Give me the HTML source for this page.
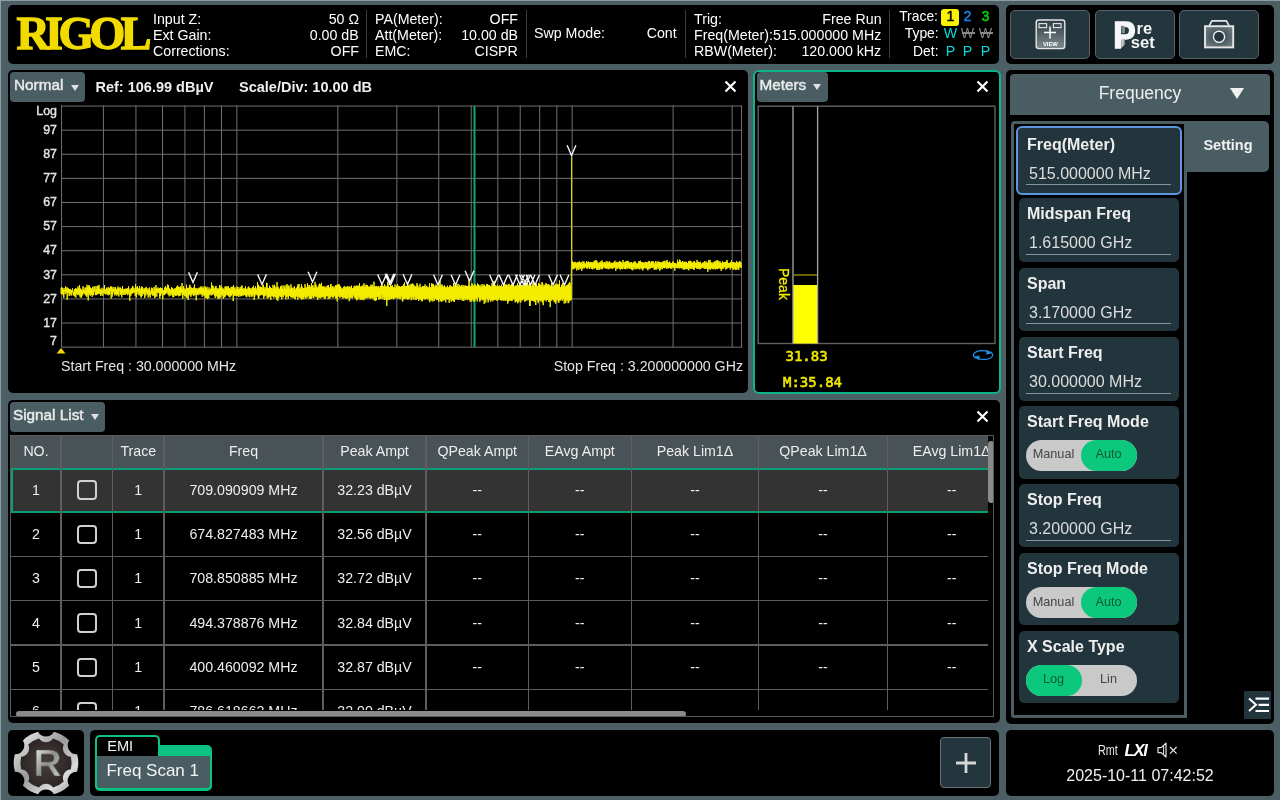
<!DOCTYPE html><html><head><meta charset="utf-8"><title>RIGOL EMI Freq Scan</title><style>
*{box-sizing:border-box;margin:0;padding:0}
html,body{width:1280px;height:800px;overflow:hidden}
body{background:#4b5f64;font-family:"Liberation Sans",sans-serif;color:#fff;position:relative;font-size:14px}
#root{position:absolute;left:0;top:0;width:1280px;height:800px;overflow:hidden;will-change:transform}
.abs{position:absolute}
.panel{position:absolute;background:#000;border-radius:5px}
.t{position:absolute;white-space:nowrap;line-height:1}
.hd{font-size:15px;color:#fff;transform:scaleX(.947);transform-origin:0 0}
.hd.r{transform-origin:100% 0}
.r{text-align:right}
.sep{position:absolute;width:1px;background:#3c3c3c;top:5px;height:48px}
.dd{position:absolute;background:#4a5d62;border-radius:4px;color:#ececec;-webkit-text-stroke:0.45px #ececec;font-size:15.3px}
.dd span{position:absolute;top:5.2px;white-space:nowrap;line-height:1}
.dd i{position:absolute;width:0;height:0;border-left:4.5px solid transparent;border-right:4.5px solid transparent;border-top:6px solid #e0e0e0}
.x{position:absolute;width:14px;height:14px}
.btn{position:absolute;background:#23353d;border:1px solid #5a6468;border-radius:5px}
.item{position:absolute;left:1019px;width:160px;background:#22343c;border-radius:5px}
.item b{position:absolute;left:8px;font-size:16px;color:#eee;white-space:nowrap;line-height:1}
.item em{position:absolute;left:10px;font-style:normal;font-size:16px;color:#ddd;white-space:nowrap;line-height:1}
.item u{position:absolute;left:7px;width:145px;height:1px;background:#8a9498}
.tog{position:absolute;left:7px;width:111px;height:31px;border-radius:16px;background:#c9c9c9;font-size:12.7px;color:#444}
.tog s{position:absolute;top:0;height:31px;width:56px;border-radius:16px;background:#0cc87c;text-decoration:none}
.tog span{position:absolute;top:8.7px;line-height:1;width:55px;text-align:center}
</style></head><body><div id="root">
<div class="abs" style="left:0;top:0;width:1280px;height:1px;background:#8d9da0"></div>
<div class="abs" style="left:0;top:0;width:1.4px;height:800px;background:#8d9da0"></div>
<div class="panel" style="left:8px;top:5px;width:991px;height:59px">
<div class="t" style="left:8.5px;top:5.5px;font-family:'Liberation Serif',serif;font-weight:bold;font-size:46px;color:#f2dc00;-webkit-text-stroke:1.3px #f2dc00;letter-spacing:-4.6px">RIGOL</div>
<div class="t hd" style="left:145px;top:6.3px">Input Z:</div>
<div class="t hd r" style="right:640px;top:6.3px">50 Ω</div>
<div class="t hd" style="left:145px;top:22.3px">Ext Gain:</div>
<div class="t hd r" style="right:640px;top:22.3px">0.00 dB</div>
<div class="t hd" style="left:145px;top:38.3px">Corrections:</div>
<div class="t hd r" style="right:640px;top:38.3px">OFF</div>
<div class="sep" style="left:357.7px"></div>
<div class="t hd" style="left:367px;top:6.3px">PA(Meter):</div>
<div class="t hd r" style="right:481px;top:6.3px">OFF</div>
<div class="t hd" style="left:367px;top:22.3px">Att(Meter):</div>
<div class="t hd r" style="right:481px;top:22.3px">10.00 dB</div>
<div class="t hd" style="left:367px;top:38.3px">EMC:</div>
<div class="t hd r" style="right:481px;top:38.3px">CISPR</div>
<div class="sep" style="left:517.6px"></div>
<div class="t hd" style="left:526px;top:20.4px">Swp Mode:</div>
<div class="t hd r" style="right:322px;top:20.4px">Cont</div>
<div class="sep" style="left:676.6px"></div>
<div class="t hd" style="left:685.5px;top:6.3px">Trig:</div>
<div class="t hd r" style="right:117.5px;top:6.3px">Free Run</div>
<div class="t hd" style="left:685.5px;top:22.3px">Freq(Meter):</div>
<div class="t hd r" style="right:117.5px;top:22.3px">515.000000 MHz</div>
<div class="t hd" style="left:685.5px;top:38.3px">RBW(Meter):</div>
<div class="t hd r" style="right:117.5px;top:38.3px">120.000 kHz</div>
<div class="sep" style="left:880.8px"></div>
<div class="t hd r" style="right:60.8px;top:2.9px;transform:scaleX(.925)">Trace:</div>
<div class="t hd r" style="right:60.8px;top:20.3px;transform:scaleX(.925)">Type:</div>
<div class="t hd r" style="right:60.8px;top:38.2px;transform:scaleX(.925)">Det:</div>
<div class="abs" style="left:933.2px;top:4px;width:17.8px;height:17px;background:#fbf400;border-radius:3px"></div>
<div class="t hd" style="left:932.5px;top:2.9px;width:20px;text-align:center;color:#000;-webkit-text-stroke:0.5px #000">1</div>
<div class="t hd" style="left:950.3px;top:2.9px;width:20px;text-align:center;color:#1e80ea;-webkit-text-stroke:0.5px #1e80ea">2</div>
<div class="t hd" style="left:968.3px;top:2.9px;width:20px;text-align:center;color:#00d800;-webkit-text-stroke:0.5px #00d800">3</div>
<div class="t hd" style="left:932.5px;top:20.3px;width:20px;text-align:center;color:#00dcdc">W</div>
<div class="t hd" style="left:950.3px;top:20.3px;width:20px;text-align:center;color:#808080">W</div>
<div class="abs" style="left:953.8px;top:27.4px;width:13px;height:1.2px;background:#8a8a8a"></div>
<div class="t hd" style="left:968.3px;top:20.3px;width:20px;text-align:center;color:#808080">W</div>
<div class="abs" style="left:971.8px;top:27.4px;width:13px;height:1.2px;background:#8a8a8a"></div>
<div class="t hd" style="left:932.5px;top:38.2px;width:20px;text-align:center;color:#00dcdc">P</div>
<div class="t hd" style="left:950.3px;top:38.2px;width:20px;text-align:center;color:#00dcdc">P</div>
<div class="t hd" style="left:968.3px;top:38.2px;width:20px;text-align:center;color:#00dcdc">P</div>
</div>
<div class="panel" style="left:1005.5px;top:5px;width:268.5px;height:59px"></div>
<div class="btn" style="left:1010px;top:10px;width:80px;height:49px"></div>
<div class="btn" style="left:1094.5px;top:10px;width:80.5px;height:49px"></div>
<div class="btn" style="left:1179px;top:10px;width:80px;height:49px"></div>
<svg class="abs" style="left:1005px;top:5px" width="270" height="59" viewBox="1005 5 270 59">
<defs><linearGradient id="gv" x1="0" y1="0" x2="0" y2="1"><stop offset="0" stop-color="#2c3d44"/><stop offset="1" stop-color="#7f8b8e"/></linearGradient><radialGradient id="gc" cx="0.5" cy="0.5" r="0.7"><stop offset="0" stop-color="#2e3f46"/><stop offset="1" stop-color="#7a878a"/></radialGradient><linearGradient id="gp" x1="0" y1="0" x2="1" y2="0"><stop offset="0" stop-color="#8b9598"/><stop offset="1" stop-color="#e8e8e8"/></linearGradient><linearGradient id="gf" x1="0" y1="0" x2="1" y2="0"><stop offset="0" stop-color="#5f6d72"/><stop offset="1" stop-color="#9aa4a7"/></linearGradient><linearGradient id="gf2" x1="0" y1="0" x2="1" y2="0"><stop offset="0" stop-color="#e4e4e4"/><stop offset="1" stop-color="#8c979a"/></linearGradient></defs>
<rect x="1036.2" y="20" width="28.6" height="28.6" rx="2.5" fill="url(#gv)" stroke="#e6e6e6" stroke-width="1.4"/>
<rect x="1039" y="23.6" width="7.6" height="4" fill="none" stroke="#e6e6e6" stroke-width="1.1"/>
<rect x="1053.4" y="23.6" width="7.6" height="4" fill="none" stroke="#e6e6e6" stroke-width="1.1"/>
<path d="M1044 32.4 H1056 M1050 26.4 V38.6" stroke="#fff" stroke-width="1.5" fill="none"/>
<text x="1050.4" y="46" font-family="Liberation Sans, sans-serif" font-weight="bold" font-size="5.6" fill="#fff" text-anchor="middle" textLength="15" lengthAdjust="spacingAndGlyphs">VIEW</text>
<text x="1113.2" y="47.6" font-family="Liberation Sans, sans-serif" font-weight="bold" font-size="37.5" fill="#f6f6f6" stroke="#f6f6f6" stroke-width="1.5" textLength="22.4" lengthAdjust="spacingAndGlyphs">P</text>
<rect x="1121.2" y="25.8" width="3.6" height="7.4" fill="url(#gf)"/>
<path d="M1121.3 39.6 H1124.8 V44.6 L1121.3 48.3 Z" fill="url(#gf2)"/>
<text x="1136.6" y="33.6" font-family="Liberation Sans, sans-serif" font-weight="bold" font-size="16.6" fill="#f4f4f4" textLength="15.6" lengthAdjust="spacingAndGlyphs">re</text>
<text x="1130.8" y="47.5" font-family="Liberation Sans, sans-serif" font-weight="bold" font-size="16.6" fill="#f4f4f4" textLength="24" lengthAdjust="spacingAndGlyphs">set</text>
<path d="M1209.3 25.6 L1211.9 20.8 H1226.4 L1229 25.6" fill="none" stroke="#e6e6e6" stroke-width="1.7" stroke-linejoin="round"/>
<rect x="1205" y="26.2" width="28.2" height="21.2" fill="url(#gc)" stroke="#e6e6e6" stroke-width="1.9"/>
<circle cx="1219" cy="36.8" r="5.6" fill="#23353d" stroke="#f0f0f0" stroke-width="1.4"/>
</svg>
<div class="panel" style="left:8px;top:70px;width:740px;height:323.4px"></div>
<div class="dd" style="left:10px;top:72px;width:75px;height:29.5px"><span style="left:4px">Normal</span><i style="left:60.5px;top:12.5px"></i></div>
<div class="t" style="left:95.5px;top:80px;font-size:14.5px;font-weight:bold;color:#eee">Ref: 106.99 dBµV</div>
<div class="t" style="left:239px;top:80px;font-size:14.5px;font-weight:bold;color:#eee">Scale/Div: 10.00 dB</div>
<svg class="abs" style="left:0;top:70px" width="750" height="323" viewBox="0 70 750 323">
<path d="M61 106.05 H742 M61 130.16 H742 M61 154.27 H742 M61 178.38 H742 M61 202.49 H742 M61 226.60 H742 M61 250.71 H742 M61 274.82 H742 M61 298.93 H742 M61 323.04 H742 M61 347.15 H742 M61.55 105.4 V347.4 M103.44 105.4 V347.4 M135.94 105.4 V347.4 M162.49 105.4 V347.4 M184.93 105.4 V347.4 M204.38 105.4 V347.4 M221.53 105.4 V347.4 M236.87 105.4 V347.4 M337.81 105.4 V347.4 M396.85 105.4 V347.4 M438.74 105.4 V347.4 M471.24 105.4 V347.4 M497.79 105.4 V347.4 M520.23 105.4 V347.4 M539.68 105.4 V347.4 M556.83 105.4 V347.4 M572.17 105.4 V347.4 M673.11 105.4 V347.4 M732.15 105.4 V347.4 M741.55 105.4 V347.4" stroke="#707070" stroke-width="1" fill="none"/>
<path d="M474.5 106 V347" stroke="#0aa87c" stroke-width="2" fill="none"/>
<path d="M61.0 287.8 L61.2 293.9 L61.5 287.6 L61.8 291.2 L62.0 287.9 L62.2 294.2 L62.5 287.7 L62.8 293.2 L63.0 290.7 L63.2 295.2 L63.5 290.2 L63.8 297.8 L64.0 288.1 L64.2 291.6 L64.5 290.0 L64.8 291.8 L65.0 291.6 L65.2 294.2 L65.5 286.4 L65.8 293.2 L66.0 287.2 L66.2 291.0 L66.5 289.0 L66.8 292.0 L67.0 290.8 L67.2 299.7 L67.5 287.6 L67.8 293.1 L68.0 290.7 L68.2 292.4 L68.5 288.4 L68.8 292.8 L69.0 289.7 L69.2 296.1 L69.5 289.4 L69.8 293.8 L70.0 290.6 L70.2 294.6 L70.5 289.0 L70.8 293.0 L71.0 292.1 L71.2 295.6 L71.5 290.0 L71.8 292.8 L72.0 291.4 L72.2 292.1 L72.5 288.4 L72.8 290.4 L73.0 292.4 L73.2 295.2 L73.5 292.7 L73.8 294.1 L74.0 291.4 L74.2 295.9 L74.5 289.2 L74.8 296.4 L75.0 291.6 L75.2 293.9 L75.5 288.1 L75.8 297.6 L76.0 291.3 L76.2 293.4 L76.5 288.7 L76.8 292.4 L77.0 291.1 L77.2 294.3 L77.5 289.0 L77.8 294.9 L78.0 286.4 L78.2 294.3 L78.5 288.7 L78.8 292.8 L79.0 288.4 L79.2 295.4 L79.5 285.0 L79.8 293.1 L80.0 293.0 L80.2 297.3 L80.5 288.6 L80.8 292.0 L81.0 291.3 L81.2 297.8 L81.5 290.8 L81.8 296.2 L82.0 289.2 L82.2 293.3 L82.5 291.7 L82.8 295.1 L83.0 286.3 L83.2 289.9 L83.5 289.6 L83.8 293.0 L84.0 290.1 L84.2 293.5 L84.5 291.3 L84.8 293.7 L85.0 287.5 L85.2 290.9 L85.5 290.5 L85.8 295.6 L86.0 287.8 L86.2 291.9 L86.5 291.5 L86.8 297.0 L87.0 284.8 L87.2 295.1 L87.5 286.9 L87.8 292.0 L88.0 286.9 L88.2 300.4 L88.5 285.5 L88.8 293.0 L89.0 287.0 L89.2 293.0 L89.5 285.5 L89.8 294.6 L90.0 287.1 L90.2 295.7 L90.5 288.5 L90.8 293.7 L91.0 288.0 L91.2 289.7 L91.5 289.3 L91.8 294.7 L92.0 290.7 L92.2 296.8 L92.5 287.6 L92.8 291.2 L93.0 286.5 L93.2 295.2 L93.5 291.7 L93.8 294.9 L94.0 289.2 L94.2 291.7 L94.5 286.7 L94.8 288.7 L95.0 289.8 L95.2 291.9 L95.5 291.5 L95.8 295.2 L96.0 286.0 L96.2 294.6 L96.5 289.3 L96.8 294.9 L97.0 291.9 L97.2 294.1 L97.5 285.7 L97.8 293.4 L98.0 289.1 L98.2 293.5 L98.5 286.8 L98.8 294.1 L99.0 284.9 L99.2 291.3 L99.5 289.1 L99.8 293.1 L100.0 288.9 L100.2 294.1 L100.5 288.9 L100.8 296.0 L101.0 290.7 L101.2 294.3 L101.5 290.5 L101.8 292.1 L102.0 287.8 L102.2 290.7 L102.5 291.2 L102.8 295.8 L103.0 290.5 L103.2 292.4 L103.5 289.4 L103.8 292.2 L104.0 288.5 L104.2 289.6 L104.5 285.0 L104.8 293.8 L105.0 289.4 L105.2 290.9 L105.5 291.2 L105.8 294.5 L106.0 289.5 L106.2 291.2 L106.5 288.1 L106.8 293.9 L107.0 287.5 L107.2 288.7 L107.5 290.4 L107.8 294.4 L108.0 289.4 L108.2 295.3 L108.5 287.0 L108.8 293.6 L109.0 288.7 L109.2 294.9 L109.5 287.9 L109.8 294.3 L110.0 289.6 L110.2 290.7 L110.5 286.4 L110.8 289.0 L111.0 292.3 L111.2 298.6 L111.5 286.6 L111.8 290.7 L112.0 288.6 L112.2 296.7 L112.5 289.2 L112.8 294.0 L113.0 286.9 L113.2 291.0 L113.5 290.2 L113.8 291.9 L114.0 288.8 L114.2 292.1 L114.5 292.0 L114.8 295.5 L115.0 286.9 L115.2 293.7 L115.5 287.7 L115.8 294.4 L116.0 290.7 L116.2 292.6 L116.5 290.0 L116.8 295.6 L117.0 288.7 L117.2 293.4 L117.5 288.3 L117.8 293.9 L118.0 286.5 L118.2 294.7 L118.5 290.5 L118.8 296.5 L119.0 288.1 L119.2 290.8 L119.5 290.4 L119.8 291.2 L120.0 287.3 L120.2 294.7 L120.5 288.3 L120.8 294.3 L121.0 288.5 L121.2 291.3 L121.5 289.5 L121.8 297.3 L122.0 290.7 L122.2 294.5 L122.5 286.0 L122.8 293.9 L123.0 288.9 L123.2 292.9 L123.5 290.5 L123.8 295.0 L124.0 290.6 L124.2 292.3 L124.5 289.0 L124.8 293.4 L125.0 288.9 L125.2 295.0 L125.5 293.3 L125.8 294.2 L126.0 288.4 L126.2 293.4 L126.5 289.2 L126.8 293.5 L127.0 289.6 L127.2 292.7 L127.5 288.7 L127.8 295.2 L128.0 288.2 L128.2 293.8 L128.5 286.4 L128.8 291.3 L129.0 288.8 L129.2 293.5 L129.5 293.0 L129.8 300.8 L130.0 290.2 L130.2 292.7 L130.5 291.1 L130.8 295.8 L131.0 288.7 L131.2 293.0 L131.5 287.9 L131.8 293.9 L132.0 288.8 L132.2 293.4 L132.5 285.9 L132.8 292.9 L133.0 286.7 L133.2 291.5 L133.5 291.1 L133.8 292.6 L134.0 288.1 L134.2 292.2 L134.5 289.8 L134.8 291.0 L135.0 291.9 L135.2 295.9 L135.5 284.4 L135.8 292.7 L136.0 286.8 L136.2 297.6 L136.5 289.8 L136.8 294.3 L137.0 288.4 L137.2 291.4 L137.5 286.3 L137.8 291.4 L138.0 291.0 L138.2 294.3 L138.5 288.5 L138.8 293.1 L139.0 290.7 L139.2 295.4 L139.5 286.1 L139.8 290.2 L140.0 288.6 L140.2 289.8 L140.5 289.3 L140.8 296.4 L141.0 290.9 L141.2 297.5 L141.5 286.6 L141.8 292.7 L142.0 287.9 L142.2 296.0 L142.5 286.9 L142.8 291.9 L143.0 289.6 L143.2 291.5 L143.5 291.3 L143.8 294.2 L144.0 288.3 L144.2 292.4 L144.5 289.1 L144.8 298.0 L145.0 288.3 L145.2 289.8 L145.5 290.6 L145.8 295.5 L146.0 286.9 L146.2 292.2 L146.5 287.9 L146.8 291.6 L147.0 291.1 L147.2 294.4 L147.5 290.3 L147.8 292.5 L148.0 288.2 L148.2 297.5 L148.5 290.2 L148.8 295.1 L149.0 291.1 L149.2 295.5 L149.5 287.5 L149.8 290.7 L150.0 292.8 L150.2 297.6 L150.5 292.7 L150.8 294.4 L151.0 290.5 L151.2 294.3 L151.5 287.7 L151.8 291.1 L152.0 289.3 L152.2 293.3 L152.5 288.4 L152.8 295.8 L153.0 291.1 L153.2 292.1 L153.5 292.0 L153.8 295.4 L154.0 286.8 L154.2 295.3 L154.5 290.4 L154.8 298.1 L155.0 288.5 L155.2 296.9 L155.5 290.9 L155.8 293.7 L156.0 285.0 L156.2 291.2 L156.5 288.3 L156.8 296.6 L157.0 289.1 L157.2 290.9 L157.5 289.1 L157.8 292.6 L158.0 287.5 L158.2 291.5 L158.5 289.2 L158.8 293.1 L159.0 288.8 L159.2 292.3 L159.5 288.0 L159.8 298.3 L160.0 289.3 L160.2 296.0 L160.5 287.6 L160.8 295.4 L161.0 289.9 L161.2 293.4 L161.5 288.1 L161.8 289.7 L162.0 289.5 L162.2 291.8 L162.5 288.5 L162.8 299.2 L163.0 290.9 L163.2 292.7 L163.5 290.4 L163.8 294.5 L164.0 290.2 L164.2 295.2 L164.5 287.6 L164.8 293.8 L165.0 289.1 L165.2 293.9 L165.5 286.1 L165.8 294.1 L166.0 291.9 L166.2 293.1 L166.5 287.8 L166.8 292.0 L167.0 289.4 L167.2 292.7 L167.5 284.6 L167.8 289.4 L168.0 289.7 L168.2 294.8 L168.5 285.2 L168.8 292.9 L169.0 292.2 L169.2 296.3 L169.5 288.4 L169.8 292.3 L170.0 289.2 L170.2 291.9 L170.5 290.2 L170.8 295.6 L171.0 290.6 L171.2 293.8 L171.5 287.2 L171.8 293.2 L172.0 290.4 L172.2 295.2 L172.5 287.9 L172.8 297.3 L173.0 289.1 L173.2 292.5 L173.5 289.0 L173.8 297.0 L174.0 289.2 L174.2 294.3 L174.5 292.3 L174.8 295.1 L175.0 288.1 L175.2 293.8 L175.5 289.8 L175.8 295.9 L176.0 287.9 L176.2 295.6 L176.5 286.7 L176.8 292.1 L177.0 289.9 L177.2 292.8 L177.5 285.5 L177.8 295.1 L178.0 289.7 L178.2 295.3 L178.5 286.7 L178.8 296.3 L179.0 287.9 L179.2 295.8 L179.5 287.1 L179.8 294.2 L180.0 287.7 L180.2 294.8 L180.5 286.4 L180.8 295.5 L181.0 287.1 L181.2 292.7 L181.5 288.6 L181.8 292.5 L182.0 283.0 L182.2 293.0 L182.5 289.4 L182.8 298.7 L183.0 291.6 L183.2 294.8 L183.5 286.2 L183.8 294.6 L184.0 288.3 L184.2 293.1 L184.5 289.7 L184.8 296.1 L185.0 290.2 L185.2 294.0 L185.5 290.0 L185.8 295.9 L186.0 288.5 L186.2 297.5 L186.5 284.8 L186.8 290.5 L187.0 291.5 L187.2 298.1 L187.5 288.1 L187.8 291.3 L188.0 289.6 L188.2 300.0 L188.5 288.0 L188.8 295.3 L189.0 287.7 L189.2 293.2 L189.5 285.7 L189.8 294.1 L190.0 284.8 L190.2 295.2 L190.5 291.4 L190.8 296.9 L191.0 287.2 L191.2 293.7 L191.5 288.3 L191.8 295.3 L192.0 289.5 L192.2 293.3 L192.5 288.6 L192.8 292.9 L193.0 288.1 L193.2 294.7 L193.5 290.5 L193.8 296.2 L194.0 287.1 L194.2 292.9 L194.5 284.4 L194.8 295.1 L195.0 287.9 L195.2 294.5 L195.5 288.6 L195.8 292.1 L196.0 290.2 L196.2 300.3 L196.5 288.9 L196.8 290.3 L197.0 288.2 L197.2 294.3 L197.5 291.1 L197.8 294.4 L198.0 288.9 L198.2 295.2 L198.5 288.9 L198.8 292.6 L199.0 287.5 L199.2 293.0 L199.5 288.2 L199.8 294.4 L200.0 290.5 L200.2 293.0 L200.5 287.4 L200.8 294.4 L201.0 286.3 L201.2 292.4 L201.5 287.9 L201.8 293.5 L202.0 289.4 L202.2 296.7 L202.5 288.2 L202.8 294.3 L203.0 286.5 L203.2 295.2 L203.5 288.0 L203.8 294.4 L204.0 289.4 L204.2 295.8 L204.5 290.2 L204.8 295.3 L205.0 286.3 L205.2 298.1 L205.5 287.6 L205.8 293.7 L206.0 289.4 L206.2 297.5 L206.5 288.0 L206.8 296.4 L207.0 286.8 L207.2 299.1 L207.5 290.0 L207.8 297.6 L208.0 289.8 L208.2 295.5 L208.5 290.1 L208.8 298.4 L209.0 287.4 L209.2 294.4 L209.5 290.9 L209.8 294.8 L210.0 289.3 L210.2 294.0 L210.5 289.1 L210.8 291.4 L211.0 288.6 L211.2 295.5 L211.5 282.5 L211.8 292.1 L212.0 286.8 L212.2 294.8 L212.5 285.9 L212.8 291.4 L213.0 285.5 L213.2 294.4 L213.5 287.7 L213.8 291.9 L214.0 288.6 L214.2 294.0 L214.5 289.4 L214.8 296.0 L215.0 287.6 L215.2 298.0 L215.5 286.6 L215.8 294.3 L216.0 285.9 L216.2 296.4 L216.5 291.4 L216.8 294.4 L217.0 288.3 L217.2 296.0 L217.5 289.3 L217.8 297.7 L218.0 288.3 L218.2 298.9 L218.5 289.6 L218.8 298.0 L219.0 289.2 L219.2 293.3 L219.5 285.2 L219.8 298.6 L220.0 289.0 L220.2 297.3 L220.5 288.1 L220.8 296.5 L221.0 285.3 L221.2 294.3 L221.5 288.9 L221.8 293.8 L222.0 287.2 L222.2 294.9 L222.5 289.6 L222.8 295.6 L223.0 288.3 L223.2 298.7 L223.5 289.6 L223.8 291.9 L224.0 289.4 L224.2 297.0 L224.5 290.8 L224.8 297.4 L225.0 286.6 L225.2 296.2 L225.5 287.7 L225.8 291.9 L226.0 286.1 L226.2 295.1 L226.5 288.4 L226.8 293.6 L227.0 287.0 L227.2 293.7 L227.5 286.6 L227.8 295.2 L228.0 287.8 L228.2 295.6 L228.5 286.4 L228.8 295.2 L229.0 288.7 L229.2 296.9 L229.5 288.3 L229.8 297.4 L230.0 289.5 L230.2 294.3 L230.5 289.0 L230.8 296.4 L231.0 287.2 L231.2 295.6 L231.5 290.2 L231.8 294.6 L232.0 286.7 L232.2 293.5 L232.5 289.6 L232.8 294.0 L233.0 286.9 L233.2 301.1 L233.5 285.2 L233.8 294.1 L234.0 289.8 L234.2 295.8 L234.5 288.7 L234.8 295.6 L235.0 287.3 L235.2 295.3 L235.5 292.0 L235.8 295.2 L236.0 290.4 L236.2 296.2 L236.5 289.0 L236.8 293.2 L237.0 286.5 L237.2 296.0 L237.5 289.3 L237.8 294.4 L238.0 287.0 L238.2 294.5 L238.5 289.3 L238.8 297.0 L239.0 289.9 L239.2 293.6 L239.5 289.4 L239.8 294.7 L240.0 287.4 L240.2 296.4 L240.5 289.2 L240.8 294.5 L241.0 286.8 L241.2 295.9 L241.5 286.0 L241.8 296.2 L242.0 285.4 L242.2 293.4 L242.5 289.0 L242.8 294.9 L243.0 288.9 L243.2 295.6 L243.5 289.9 L243.8 295.0 L244.0 288.1 L244.2 293.7 L244.5 288.8 L244.8 295.1 L245.0 289.2 L245.2 294.8 L245.5 286.3 L245.8 296.2 L246.0 288.7 L246.2 296.6 L246.5 289.0 L246.8 297.3 L247.0 290.6 L247.2 294.6 L247.5 289.6 L247.8 293.9 L248.0 287.4 L248.2 295.6 L248.5 286.6 L248.8 294.5 L249.0 287.5 L249.2 296.9 L249.5 287.9 L249.8 297.2 L250.0 288.0 L250.2 294.2 L250.5 290.1 L250.8 293.6 L251.0 288.3 L251.2 295.6 L251.5 290.8 L251.8 296.9 L252.0 288.8 L252.2 292.9 L252.5 287.1 L252.8 296.2 L253.0 287.1 L253.2 294.5 L253.5 285.7 L253.8 293.5 L254.0 288.1 L254.2 299.8 L254.5 290.5 L254.8 296.5 L255.0 288.4 L255.2 293.8 L255.5 286.4 L255.8 294.9 L256.0 288.2 L256.2 294.0 L256.5 290.1 L256.8 292.6 L257.0 289.9 L257.2 295.3 L257.5 281.9 L257.8 294.0 L258.0 288.6 L258.2 297.5 L258.5 284.7 L258.8 298.7 L259.0 286.5 L259.2 293.9 L259.5 288.5 L259.8 295.8 L260.0 286.4 L260.2 293.3 L260.5 287.3 L260.8 295.1 L261.0 289.5 L261.2 292.6 L261.5 287.2 L261.8 295.1 L262.0 289.6 L262.2 294.2 L262.5 288.0 L262.8 294.5 L263.0 284.7 L263.2 295.4 L263.5 284.9 L263.8 298.6 L264.0 289.9 L264.2 296.3 L264.5 289.5 L264.8 294.5 L265.0 287.1 L265.2 294.6 L265.5 288.7 L265.8 296.2 L266.0 288.6 L266.2 293.5 L266.5 282.8 L266.8 293.8 L267.0 283.0 L267.2 298.2 L267.5 288.1 L267.8 298.3 L268.0 288.3 L268.2 295.2 L268.5 288.2 L268.8 297.3 L269.0 288.4 L269.2 297.2 L269.5 285.7 L269.8 293.1 L270.0 287.3 L270.2 295.7 L270.5 287.0 L270.8 299.8 L271.0 288.4 L271.2 296.1 L271.5 288.1 L271.8 294.2 L272.0 288.6 L272.2 295.8 L272.5 288.9 L272.8 296.5 L273.0 284.8 L273.2 295.3 L273.5 290.2 L273.8 297.8 L274.0 287.7 L274.2 294.7 L274.5 284.9 L274.8 296.4 L275.0 286.5 L275.2 294.5 L275.5 288.4 L275.8 297.1 L276.0 287.4 L276.2 297.8 L276.5 288.2 L276.8 299.9 L277.0 282.1 L277.2 295.1 L277.5 290.4 L277.8 300.7 L278.0 286.7 L278.2 297.4 L278.5 288.2 L278.8 297.9 L279.0 290.5 L279.2 296.0 L279.5 289.2 L279.8 293.0 L280.0 288.6 L280.2 295.6 L280.5 286.0 L280.8 297.0 L281.0 287.1 L281.2 296.5 L281.5 287.2 L281.8 299.3 L282.0 285.4 L282.2 296.3 L282.5 288.9 L282.8 294.4 L283.0 288.8 L283.2 297.4 L283.5 289.6 L283.8 294.0 L284.0 285.5 L284.2 295.1 L284.5 286.8 L284.8 295.3 L285.0 288.7 L285.2 294.4 L285.5 289.4 L285.8 299.3 L286.0 285.4 L286.2 297.0 L286.5 289.5 L286.8 296.6 L287.0 284.1 L287.2 293.1 L287.5 288.7 L287.8 296.3 L288.0 285.6 L288.2 298.8 L288.5 286.3 L288.8 296.4 L289.0 285.7 L289.2 293.3 L289.5 292.5 L289.8 295.9 L290.0 288.7 L290.2 294.7 L290.5 289.7 L290.8 297.2 L291.0 284.3 L291.2 295.4 L291.5 288.3 L291.8 297.5 L292.0 289.7 L292.2 296.9 L292.5 287.8 L292.8 297.5 L293.0 289.4 L293.2 297.7 L293.5 291.1 L293.8 295.6 L294.0 287.3 L294.2 295.8 L294.5 286.2 L294.8 298.6 L295.0 288.4 L295.2 299.3 L295.5 290.3 L295.8 296.6 L296.0 290.7 L296.2 296.6 L296.5 287.7 L296.8 292.2 L297.0 288.0 L297.2 295.9 L297.5 286.4 L297.8 299.6 L298.0 284.4 L298.2 295.5 L298.5 286.3 L298.8 297.2 L299.0 284.0 L299.2 294.4 L299.5 289.1 L299.8 297.2 L300.0 288.8 L300.2 298.2 L300.5 289.1 L300.8 298.2 L301.0 287.4 L301.2 296.6 L301.5 284.1 L301.8 299.8 L302.0 286.4 L302.2 296.6 L302.5 290.9 L302.8 298.0 L303.0 288.0 L303.2 298.8 L303.5 288.5 L303.8 299.1 L304.0 288.0 L304.2 294.8 L304.5 288.1 L304.8 296.8 L305.0 284.1 L305.2 295.3 L305.5 288.8 L305.8 298.8 L306.0 287.5 L306.2 297.4 L306.5 287.7 L306.8 294.7 L307.0 288.5 L307.2 297.5 L307.5 283.3 L307.8 294.0 L308.0 285.1 L308.2 295.9 L308.5 287.5 L308.8 296.0 L309.0 287.1 L309.2 298.6 L309.5 285.1 L309.8 297.7 L310.0 286.5 L310.2 298.7 L310.5 288.9 L310.8 298.8 L311.0 286.8 L311.2 298.7 L311.5 283.2 L311.8 296.4 L312.0 285.3 L312.2 294.1 L312.5 287.6 L312.8 296.2 L313.0 285.3 L313.2 298.1 L313.5 288.4 L313.8 298.0 L314.0 289.5 L314.2 296.2 L314.5 287.7 L314.8 295.6 L315.0 281.9 L315.2 294.1 L315.5 287.5 L315.8 296.9 L316.0 284.5 L316.2 294.4 L316.5 287.4 L316.8 296.7 L317.0 290.1 L317.2 297.8 L317.5 287.8 L317.8 300.0 L318.0 286.8 L318.2 297.5 L318.5 287.3 L318.8 297.1 L319.0 284.6 L319.2 297.4 L319.5 283.7 L319.8 297.3 L320.0 284.2 L320.2 298.4 L320.5 286.9 L320.8 296.9 L321.0 284.6 L321.2 296.1 L321.5 282.8 L321.8 297.5 L322.0 287.5 L322.2 296.3 L322.5 286.8 L322.8 297.1 L323.0 286.4 L323.2 296.8 L323.5 286.7 L323.8 294.4 L324.0 286.7 L324.2 298.5 L324.5 287.7 L324.8 297.0 L325.0 286.6 L325.2 299.1 L325.5 287.8 L325.8 296.8 L326.0 290.1 L326.2 296.0 L326.5 288.5 L326.8 296.1 L327.0 285.7 L327.2 293.8 L327.5 287.6 L327.8 296.1 L328.0 285.5 L328.2 299.0 L328.5 285.3 L328.8 294.7 L329.0 287.2 L329.2 295.9 L329.5 288.0 L329.8 298.8 L330.0 287.4 L330.2 297.5 L330.5 284.4 L330.8 294.4 L331.0 284.0 L331.2 293.3 L331.5 288.0 L331.8 296.7 L332.0 288.4 L332.2 295.5 L332.5 286.3 L332.8 297.6 L333.0 286.2 L333.2 297.6 L333.5 288.5 L333.8 294.6 L334.0 288.9 L334.2 296.4 L334.5 288.9 L334.8 295.3 L335.0 286.6 L335.2 295.7 L335.5 285.4 L335.8 298.6 L336.0 285.5 L336.2 298.0 L336.5 284.9 L336.8 297.8 L337.0 289.3 L337.2 301.4 L337.5 286.3 L337.8 296.7 L338.0 284.2 L338.2 296.3 L338.5 284.8 L338.8 295.6 L339.0 287.4 L339.2 293.4 L339.5 284.5 L339.8 297.4 L340.0 288.3 L340.2 297.6 L340.5 286.4 L340.8 296.5 L341.0 287.6 L341.2 294.9 L341.5 288.7 L341.8 297.0 L342.0 289.1 L342.2 296.6 L342.5 288.7 L342.8 298.7 L343.0 288.8 L343.2 298.0 L343.5 286.8 L343.8 295.0 L344.0 287.8 L344.2 296.4 L344.5 286.3 L344.8 298.0 L345.0 286.7 L345.2 296.7 L345.5 289.7 L345.8 298.4 L346.0 287.7 L346.2 295.6 L346.5 287.0 L346.8 298.8 L347.0 286.7 L347.2 298.4 L347.5 286.4 L347.8 294.9 L348.0 287.4 L348.2 297.6 L348.5 287.9 L348.8 294.5 L349.0 286.3 L349.2 301.2 L349.5 290.0 L349.8 298.8 L350.0 286.7 L350.2 295.2 L350.5 289.8 L350.8 297.7 L351.0 287.0 L351.2 297.5 L351.5 285.6 L351.8 295.5 L352.0 288.0 L352.2 298.5 L352.5 288.6 L352.8 297.3 L353.0 288.7 L353.2 294.8 L353.5 288.1 L353.8 294.4 L354.0 286.3 L354.2 296.2 L354.5 286.5 L354.8 297.6 L355.0 285.7 L355.2 298.2 L355.5 287.2 L355.8 297.7 L356.0 287.7 L356.2 298.9 L356.5 285.6 L356.8 300.3 L357.0 286.7 L357.2 298.8 L357.5 286.2 L357.8 299.6 L358.0 285.5 L358.2 296.3 L358.5 287.9 L358.8 296.3 L359.0 285.9 L359.2 298.4 L359.5 283.4 L359.8 295.9 L360.0 286.3 L360.2 300.0 L360.5 287.1 L360.8 299.4 L361.0 287.1 L361.2 298.5 L361.5 286.1 L361.8 297.7 L362.0 289.5 L362.2 300.1 L362.5 286.7 L362.8 298.1 L363.0 285.1 L363.2 298.3 L363.5 287.3 L363.8 300.2 L364.0 283.3 L364.2 294.9 L364.5 286.9 L364.8 297.9 L365.0 286.6 L365.2 299.0 L365.5 286.8 L365.8 298.0 L366.0 284.7 L366.2 296.4 L366.5 285.2 L366.8 298.0 L367.0 286.5 L367.2 295.7 L367.5 285.2 L367.8 298.4 L368.0 286.4 L368.2 297.5 L368.5 287.4 L368.8 295.5 L369.0 288.2 L369.2 295.0 L369.5 286.6 L369.8 297.9 L370.0 289.3 L370.2 298.6 L370.5 286.1 L370.8 298.7 L371.0 284.6 L371.2 297.6 L371.5 286.5 L371.8 295.3 L372.0 287.1 L372.2 298.0 L372.5 284.8 L372.8 297.3 L373.0 287.1 L373.2 299.4 L373.5 287.8 L373.8 296.5 L374.0 281.7 L374.2 297.6 L374.5 286.2 L374.8 300.8 L375.0 286.1 L375.2 299.3 L375.5 286.7 L375.8 300.8 L376.0 288.2 L376.2 300.0 L376.5 286.1 L376.8 296.8 L377.0 287.3 L377.2 297.1 L377.5 287.6 L377.8 296.2 L378.0 286.4 L378.2 296.7 L378.5 286.2 L378.8 299.6 L379.0 287.9 L379.2 296.0 L379.5 288.2 L379.8 299.1 L380.0 286.5 L380.2 297.8 L380.5 285.9 L380.8 299.0 L381.0 285.9 L381.2 295.1 L381.5 283.9 L381.8 294.0 L382.0 287.3 L382.2 299.2 L382.5 285.7 L382.8 296.9 L383.0 285.8 L383.2 297.5 L383.5 286.6 L383.8 296.3 L384.0 288.6 L384.2 300.0 L384.5 284.5 L384.8 296.3 L385.0 285.4 L385.2 299.7 L385.5 287.3 L385.8 296.8 L386.0 287.6 L386.2 298.1 L386.5 286.5 L386.8 306.1 L387.0 288.3 L387.2 300.1 L387.5 282.2 L387.8 296.2 L388.0 284.0 L388.2 294.8 L388.5 286.0 L388.8 299.4 L389.0 287.0 L389.2 300.1 L389.5 287.8 L389.8 297.4 L390.0 286.9 L390.2 296.7 L390.5 283.6 L390.8 299.1 L391.0 285.8 L391.2 299.0 L391.5 286.1 L391.8 298.0 L392.0 288.0 L392.2 297.6 L392.5 285.3 L392.8 298.0 L393.0 287.6 L393.2 299.3 L393.5 287.7 L393.8 298.9 L394.0 287.4 L394.2 298.1 L394.5 287.7 L394.8 298.2 L395.0 284.4 L395.2 294.8 L395.5 287.9 L395.8 297.2 L396.0 289.1 L396.2 298.2 L396.5 286.5 L396.8 296.7 L397.0 285.6 L397.2 297.1 L397.5 284.3 L397.8 298.8 L398.0 285.6 L398.2 296.3 L398.5 288.4 L398.8 297.3 L399.0 286.5 L399.2 298.7 L399.5 286.0 L399.8 296.4 L400.0 286.8 L400.2 299.2 L400.5 287.7 L400.8 297.5 L401.0 286.8 L401.2 296.4 L401.5 286.2 L401.8 295.6 L402.0 289.1 L402.2 300.5 L402.5 285.9 L402.8 301.5 L403.0 287.3 L403.2 298.2 L403.5 284.1 L403.8 298.6 L404.0 284.7 L404.2 299.1 L404.5 282.5 L404.8 297.7 L405.0 288.1 L405.2 299.0 L405.5 286.3 L405.8 297.6 L406.0 286.7 L406.2 296.7 L406.5 285.9 L406.8 298.3 L407.0 286.3 L407.2 299.5 L407.5 282.6 L407.8 297.3 L408.0 284.8 L408.2 299.5 L408.5 285.6 L408.8 297.3 L409.0 287.0 L409.2 298.9 L409.5 286.5 L409.8 298.3 L410.0 284.5 L410.2 296.3 L410.5 287.5 L410.8 296.5 L411.0 284.4 L411.2 300.2 L411.5 284.4 L411.8 296.2 L412.0 283.5 L412.2 297.6 L412.5 285.8 L412.8 296.4 L413.0 283.8 L413.2 299.6 L413.5 286.9 L413.8 298.6 L414.0 285.0 L414.2 296.5 L414.5 287.3 L414.8 295.7 L415.0 288.2 L415.2 299.9 L415.5 286.5 L415.8 296.0 L416.0 286.2 L416.2 299.9 L416.5 287.9 L416.8 297.5 L417.0 283.2 L417.2 295.4 L417.5 285.0 L417.8 299.0 L418.0 285.9 L418.2 298.0 L418.5 288.5 L418.8 300.9 L419.0 288.9 L419.2 298.2 L419.5 287.7 L419.8 298.7 L420.0 283.8 L420.2 299.0 L420.5 288.9 L420.8 300.0 L421.0 286.9 L421.2 297.7 L421.5 288.0 L421.8 301.0 L422.0 287.4 L422.2 301.4 L422.5 286.2 L422.8 296.7 L423.0 286.3 L423.2 298.8 L423.5 286.3 L423.8 297.6 L424.0 287.5 L424.2 299.3 L424.5 286.8 L424.8 299.2 L425.0 284.5 L425.2 299.3 L425.5 287.0 L425.8 297.8 L426.0 288.4 L426.2 298.2 L426.5 285.8 L426.8 298.3 L427.0 286.6 L427.2 299.3 L427.5 287.7 L427.8 298.1 L428.0 287.6 L428.2 297.2 L428.5 288.3 L428.8 298.5 L429.0 286.8 L429.2 300.5 L429.5 283.0 L429.8 302.2 L430.0 287.4 L430.2 300.2 L430.5 287.6 L430.8 299.6 L431.0 290.2 L431.2 298.0 L431.5 283.4 L431.8 300.8 L432.0 285.3 L432.2 297.4 L432.5 283.8 L432.8 301.4 L433.0 284.7 L433.2 297.8 L433.5 284.2 L433.8 297.5 L434.0 287.1 L434.2 301.1 L434.5 288.7 L434.8 299.3 L435.0 285.6 L435.2 298.2 L435.5 288.3 L435.8 298.5 L436.0 284.6 L436.2 298.2 L436.5 286.0 L436.8 300.1 L437.0 285.5 L437.2 300.1 L437.5 287.8 L437.8 300.0 L438.0 287.0 L438.2 296.4 L438.5 288.1 L438.8 301.9 L439.0 285.3 L439.2 298.4 L439.5 286.3 L439.8 299.0 L440.0 280.7 L440.2 299.3 L440.5 287.3 L440.8 301.0 L441.0 284.7 L441.2 301.8 L441.5 288.4 L441.8 298.5 L442.0 284.5 L442.2 298.4 L442.5 286.0 L442.8 301.3 L443.0 288.0 L443.2 298.5 L443.5 286.6 L443.8 300.1 L444.0 286.7 L444.2 300.1 L444.5 285.4 L444.8 299.9 L445.0 286.5 L445.2 300.2 L445.5 287.9 L445.8 302.4 L446.0 290.1 L446.2 297.9 L446.5 287.5 L446.8 298.8 L447.0 286.9 L447.2 298.2 L447.5 285.7 L447.8 299.6 L448.0 287.0 L448.2 297.6 L448.5 287.6 L448.8 299.3 L449.0 289.5 L449.2 302.9 L449.5 286.7 L449.8 299.3 L450.0 285.1 L450.2 298.1 L450.5 288.3 L450.8 298.5 L451.0 286.1 L451.2 301.6 L451.5 286.7 L451.8 298.7 L452.0 286.6 L452.2 300.7 L452.5 287.3 L452.8 299.8 L453.0 288.5 L453.2 298.8 L453.5 283.1 L453.8 301.2 L454.0 285.2 L454.2 302.0 L454.5 287.0 L454.8 299.0 L455.0 285.8 L455.2 299.5 L455.5 283.4 L455.8 298.8 L456.0 285.8 L456.2 297.4 L456.5 286.7 L456.8 299.3 L457.0 284.4 L457.2 294.5 L457.5 288.3 L457.8 299.8 L458.0 283.8 L458.2 298.7 L458.5 287.2 L458.8 299.9 L459.0 288.1 L459.2 297.9 L459.5 284.9 L459.8 297.8 L460.0 285.9 L460.2 299.0 L460.5 287.5 L460.8 299.7 L461.0 286.6 L461.2 298.0 L461.5 285.0 L461.8 297.4 L462.0 288.1 L462.2 300.6 L462.5 287.0 L462.8 299.2 L463.0 284.9 L463.2 299.6 L463.5 286.6 L463.8 301.1 L464.0 287.9 L464.2 298.3 L464.5 286.7 L464.8 297.5 L465.0 285.3 L465.2 300.1 L465.5 286.2 L465.8 297.6 L466.0 285.7 L466.2 298.5 L466.5 286.3 L466.8 298.8 L467.0 286.0 L467.2 300.2 L467.5 286.0 L467.8 299.6 L468.0 287.4 L468.2 298.8 L468.5 285.7 L468.8 298.7 L469.0 280.3 L469.2 299.8 L469.5 285.3 L469.8 299.5 L470.0 288.1 L470.2 301.8 L470.5 287.1 L470.8 299.2 L471.0 285.9 L471.2 300.7 L471.5 287.0 L471.8 301.4 L472.0 283.2 L472.2 297.4 L472.5 286.3 L472.8 299.0 L473.0 285.0 L473.2 299.8 L473.5 287.6 L473.8 301.6 L474.0 285.9 L474.2 299.4 L474.5 289.9 L474.8 301.2 L475.0 284.1 L475.2 298.7 L475.5 285.6 L475.8 299.2 L476.0 285.5 L476.2 297.9 L476.5 286.6 L476.8 298.1 L477.0 286.8 L477.2 301.5 L477.5 283.4 L477.8 297.2 L478.0 284.8 L478.2 297.4 L478.5 284.7 L478.8 297.4 L479.0 286.3 L479.2 297.1 L479.5 287.2 L479.8 301.9 L480.0 284.9 L480.2 299.8 L480.5 287.6 L480.8 300.4 L481.0 286.8 L481.2 297.9 L481.5 288.2 L481.8 297.4 L482.0 284.1 L482.2 299.4 L482.5 287.2 L482.8 300.3 L483.0 286.0 L483.2 299.9 L483.5 285.4 L483.8 299.0 L484.0 284.4 L484.2 303.9 L484.5 285.8 L484.8 299.0 L485.0 287.1 L485.2 297.1 L485.5 286.8 L485.8 302.5 L486.0 285.8 L486.2 298.7 L486.5 284.3 L486.8 296.7 L487.0 287.8 L487.2 298.6 L487.5 284.2 L487.8 299.5 L488.0 284.8 L488.2 302.3 L488.5 285.6 L488.8 300.3 L489.0 285.5 L489.2 298.2 L489.5 285.3 L489.8 298.8 L490.0 286.4 L490.2 300.1 L490.5 286.3 L490.8 301.7 L491.0 286.2 L491.2 299.7 L491.5 286.9 L491.8 299.8 L492.0 283.2 L492.2 299.4 L492.5 286.8 L492.8 301.2 L493.0 284.6 L493.2 299.4 L493.5 286.7 L493.8 300.1 L494.0 280.9 L494.2 300.1 L494.5 282.9 L494.8 299.5 L495.0 286.9 L495.2 299.7 L495.5 285.5 L495.8 298.7 L496.0 285.6 L496.2 300.2 L496.5 286.6 L496.8 299.3 L497.0 287.7 L497.2 301.0 L497.5 284.7 L497.8 297.9 L498.0 286.5 L498.2 300.0 L498.5 286.5 L498.8 298.2 L499.0 287.5 L499.2 295.6 L499.5 285.5 L499.8 298.3 L500.0 288.1 L500.2 300.1 L500.5 286.0 L500.8 300.3 L501.0 287.8 L501.2 299.3 L501.5 284.6 L501.8 300.7 L502.0 286.6 L502.2 298.7 L502.5 286.6 L502.8 300.0 L503.0 287.5 L503.2 298.0 L503.5 285.2 L503.8 300.8 L504.0 285.4 L504.2 300.4 L504.5 282.3 L504.8 298.7 L505.0 287.3 L505.2 298.9 L505.5 285.3 L505.8 301.0 L506.0 284.2 L506.2 299.4 L506.5 285.1 L506.8 299.3 L507.0 285.1 L507.2 300.4 L507.5 286.7 L507.8 303.7 L508.0 284.6 L508.2 301.6 L508.5 287.2 L508.8 300.8 L509.0 283.7 L509.2 300.6 L509.5 287.2 L509.8 299.2 L510.0 285.2 L510.2 300.6 L510.5 285.9 L510.8 298.2 L511.0 285.3 L511.2 300.5 L511.5 284.2 L511.8 301.1 L512.0 286.3 L512.2 300.7 L512.5 283.7 L512.8 298.0 L513.0 285.9 L513.2 297.7 L513.5 284.2 L513.8 299.4 L514.0 286.8 L514.2 298.9 L514.5 286.9 L514.8 299.5 L515.0 285.6 L515.2 302.4 L515.5 287.0 L515.8 299.0 L516.0 285.6 L516.2 301.5 L516.5 287.3 L516.8 301.3 L517.0 285.4 L517.2 298.8 L517.5 283.1 L517.8 303.3 L518.0 285.2 L518.2 299.8 L518.5 286.1 L518.8 302.0 L519.0 285.4 L519.2 297.4 L519.5 282.4 L519.8 299.3 L520.0 287.7 L520.2 300.9 L520.5 282.9 L520.8 302.5 L521.0 287.8 L521.2 300.0 L521.5 285.3 L521.8 299.4 L522.0 285.1 L522.2 300.4 L522.5 284.9 L522.8 300.2 L523.0 286.2 L523.2 297.6 L523.5 286.2 L523.8 299.0 L524.0 283.4 L524.2 298.0 L524.5 286.1 L524.8 301.8 L525.0 283.9 L525.2 301.0 L525.5 281.6 L525.8 299.3 L526.0 284.8 L526.2 299.0 L526.5 284.4 L526.8 300.6 L527.0 287.0 L527.2 299.9 L527.5 281.9 L527.8 299.0 L528.0 284.6 L528.2 300.1 L528.5 286.2 L528.8 298.1 L529.0 287.9 L529.2 300.4 L529.5 282.1 L529.8 305.9 L530.0 286.5 L530.2 306.0 L530.5 283.3 L530.8 299.9 L531.0 285.9 L531.2 300.6 L531.5 287.7 L531.8 298.4 L532.0 285.8 L532.2 300.6 L532.5 284.8 L532.8 300.2 L533.0 282.5 L533.2 301.0 L533.5 288.1 L533.8 299.3 L534.0 282.4 L534.2 301.7 L534.5 287.4 L534.8 301.6 L535.0 287.4 L535.2 301.5 L535.5 283.6 L535.8 305.1 L536.0 285.6 L536.2 298.9 L536.5 283.7 L536.8 299.9 L537.0 285.9 L537.2 299.4 L537.5 286.2 L537.8 301.1 L538.0 286.0 L538.2 303.2 L538.5 283.2 L538.8 300.6 L539.0 286.8 L539.2 298.7 L539.5 283.9 L539.8 300.5 L540.0 284.5 L540.2 299.7 L540.5 285.5 L540.8 301.3 L541.0 285.5 L541.2 299.8 L541.5 286.3 L541.8 299.6 L542.0 282.1 L542.2 302.3 L542.5 282.7 L542.8 300.9 L543.0 284.4 L543.2 305.2 L543.5 287.3 L543.8 298.9 L544.0 286.8 L544.2 298.9 L544.5 285.6 L544.8 300.3 L545.0 284.7 L545.2 299.4 L545.5 285.2 L545.8 299.7 L546.0 283.0 L546.2 301.4 L546.5 283.9 L546.8 299.6 L547.0 288.7 L547.2 299.8 L547.5 284.7 L547.8 300.0 L548.0 284.9 L548.2 298.7 L548.5 284.2 L548.8 301.9 L549.0 284.6 L549.2 302.0 L549.5 287.0 L549.8 299.3 L550.0 285.7 L550.2 307.1 L550.5 287.5 L550.8 300.4 L551.0 285.6 L551.2 300.3 L551.5 283.1 L551.8 300.4 L552.0 286.1 L552.2 298.5 L552.5 286.1 L552.8 299.1 L553.0 286.3 L553.2 299.9 L553.5 287.7 L553.8 299.9 L554.0 285.5 L554.2 302.2 L554.5 285.3 L554.8 299.8 L555.0 284.7 L555.2 301.9 L555.5 284.7 L555.8 303.7 L556.0 283.5 L556.2 300.4 L556.5 285.6 L556.8 299.0 L557.0 285.6 L557.2 299.4 L557.5 284.4 L557.8 299.7 L558.0 284.7 L558.2 301.6 L558.5 285.0 L558.8 303.0 L559.0 284.3 L559.2 300.0 L559.5 280.4 L559.8 300.6 L560.0 287.0 L560.2 300.3 L560.5 287.6 L560.8 299.6 L561.0 287.2 L561.2 299.0 L561.5 285.0 L561.8 297.7 L562.0 284.7 L562.2 300.8 L562.5 283.0 L562.8 298.4 L563.0 283.6 L563.2 298.9 L563.5 286.1 L563.8 298.8 L564.0 286.6 L564.2 303.5 L564.5 287.0 L564.8 299.8 L565.0 285.5 L565.2 300.1 L565.5 287.0 L565.8 303.2 L566.0 286.9 L566.2 300.3 L566.5 285.6 L566.8 300.6 L567.0 285.6 L567.2 300.0 L567.5 284.7 L567.8 300.3 L568.0 286.6 L568.2 303.2 L568.5 283.7 L568.8 302.7 L569.0 284.2 L569.2 300.3 L569.5 282.2 L569.8 299.8 L570.0 282.8 L570.2 300.7 L570.5 286.1 L570.8 299.6 L571.0 300.0 L571.5 262.0 L572.0 264.4 L572.2 269.0 L572.5 261.1 L572.8 269.4 L573.0 262.3 L573.2 267.5 L573.5 262.9 L573.8 268.9 L574.0 262.2 L574.2 267.8 L574.5 263.2 L574.8 268.7 L575.0 261.8 L575.2 265.6 L575.5 262.7 L575.8 267.4 L576.0 263.6 L576.2 267.2 L576.5 262.9 L576.8 270.4 L577.0 262.7 L577.2 267.3 L577.5 263.6 L577.8 268.9 L578.0 261.9 L578.2 266.8 L578.5 263.5 L578.8 270.0 L579.0 262.0 L579.2 265.5 L579.5 261.5 L579.8 267.2 L580.0 262.8 L580.2 269.0 L580.5 263.5 L580.8 267.3 L581.0 262.4 L581.2 266.5 L581.5 262.2 L581.8 270.8 L582.0 264.2 L582.2 268.3 L582.5 264.0 L582.8 268.6 L583.0 261.2 L583.2 267.4 L583.5 263.4 L583.8 267.6 L584.0 261.6 L584.2 268.3 L584.5 263.7 L584.8 267.4 L585.0 263.0 L585.2 266.4 L585.5 264.5 L585.8 266.9 L586.0 264.0 L586.2 267.7 L586.5 261.1 L586.8 268.6 L587.0 264.0 L587.2 267.9 L587.5 263.1 L587.8 268.6 L588.0 261.8 L588.2 267.0 L588.5 261.5 L588.8 267.0 L589.0 263.3 L589.2 267.6 L589.5 262.6 L589.8 269.0 L590.0 262.1 L590.2 267.2 L590.5 262.7 L590.8 266.5 L591.0 262.9 L591.2 266.7 L591.5 262.1 L591.8 269.0 L592.0 263.3 L592.2 267.4 L592.5 262.4 L592.8 269.4 L593.0 263.9 L593.2 267.6 L593.5 262.6 L593.8 267.6 L594.0 261.2 L594.2 268.7 L594.5 262.7 L594.8 268.2 L595.0 260.4 L595.2 267.7 L595.5 263.0 L595.8 266.5 L596.0 260.0 L596.2 267.8 L596.5 262.0 L596.8 269.8 L597.0 261.2 L597.2 265.9 L597.5 262.7 L597.8 269.9 L598.0 263.4 L598.2 268.4 L598.5 264.0 L598.8 267.8 L599.0 262.7 L599.2 269.8 L599.5 262.5 L599.8 269.5 L600.0 263.4 L600.2 266.7 L600.5 261.6 L600.8 267.5 L601.0 262.8 L601.2 269.1 L601.5 262.2 L601.8 268.4 L602.0 260.3 L602.2 269.3 L602.5 262.8 L602.8 268.5 L603.0 262.0 L603.2 267.1 L603.5 264.0 L603.8 266.6 L604.0 263.3 L604.2 266.9 L604.5 262.1 L604.8 267.9 L605.0 263.8 L605.2 268.4 L605.5 263.4 L605.8 268.2 L606.0 261.2 L606.2 265.6 L606.5 263.5 L606.8 268.7 L607.0 261.7 L607.2 268.1 L607.5 262.9 L607.8 266.5 L608.0 261.6 L608.2 269.3 L608.5 263.0 L608.8 266.8 L609.0 263.6 L609.2 266.7 L609.5 261.4 L609.8 268.8 L610.0 262.4 L610.2 268.2 L610.5 263.8 L610.8 266.8 L611.0 263.9 L611.2 266.6 L611.5 262.7 L611.8 268.3 L612.0 263.3 L612.2 268.9 L612.5 263.2 L612.8 268.3 L613.0 262.8 L613.2 268.2 L613.5 262.9 L613.8 267.1 L614.0 262.2 L614.2 266.4 L614.5 262.4 L614.8 267.4 L615.0 260.7 L615.2 268.0 L615.5 263.0 L615.8 270.8 L616.0 263.0 L616.2 268.7 L616.5 261.9 L616.8 267.3 L617.0 263.6 L617.2 267.3 L617.5 262.9 L617.8 268.9 L618.0 261.9 L618.2 266.7 L618.5 262.4 L618.8 267.5 L619.0 262.9 L619.2 267.7 L619.5 261.2 L619.8 268.6 L620.0 263.1 L620.2 269.8 L620.5 261.6 L620.8 267.7 L621.0 264.0 L621.2 268.1 L621.5 262.5 L621.8 269.0 L622.0 262.8 L622.2 269.0 L622.5 264.1 L622.8 269.3 L623.0 260.0 L623.2 266.5 L623.5 264.7 L623.8 266.4 L624.0 262.0 L624.2 268.2 L624.5 263.7 L624.8 269.1 L625.0 262.0 L625.2 266.4 L625.5 264.0 L625.8 269.2 L626.0 260.9 L626.2 268.2 L626.5 264.1 L626.8 266.7 L627.0 261.2 L627.2 268.7 L627.5 261.6 L627.8 266.8 L628.0 260.8 L628.2 266.6 L628.5 261.6 L628.8 267.8 L629.0 263.1 L629.2 268.8 L629.5 263.6 L629.8 267.9 L630.0 262.1 L630.2 268.7 L630.5 263.0 L630.8 267.4 L631.0 263.5 L631.2 268.3 L631.5 262.1 L631.8 270.0 L632.0 262.8 L632.2 266.6 L632.5 263.8 L632.8 270.3 L633.0 264.3 L633.2 267.4 L633.5 262.0 L633.8 269.0 L634.0 261.9 L634.2 266.0 L634.5 263.4 L634.8 267.1 L635.0 261.2 L635.2 269.4 L635.5 262.3 L635.8 265.9 L636.0 262.8 L636.2 268.0 L636.5 264.6 L636.8 269.1 L637.0 263.2 L637.2 268.0 L637.5 264.3 L637.8 268.2 L638.0 264.0 L638.2 268.9 L638.5 261.4 L638.8 266.6 L639.0 263.0 L639.2 267.2 L639.5 261.3 L639.8 269.5 L640.0 262.0 L640.2 265.8 L640.5 260.7 L640.8 267.8 L641.0 263.3 L641.2 268.5 L641.5 262.4 L641.8 266.7 L642.0 262.3 L642.2 269.4 L642.5 262.7 L642.8 270.4 L643.0 262.6 L643.2 269.0 L643.5 262.7 L643.8 268.2 L644.0 263.3 L644.2 267.5 L644.5 264.4 L644.8 267.7 L645.0 262.1 L645.2 267.9 L645.5 261.9 L645.8 268.4 L646.0 262.5 L646.2 268.3 L646.5 262.2 L646.8 266.5 L647.0 263.9 L647.2 268.9 L647.5 263.2 L647.8 270.3 L648.0 261.8 L648.2 267.3 L648.5 261.2 L648.8 269.3 L649.0 263.4 L649.2 267.4 L649.5 261.0 L649.8 268.8 L650.0 263.2 L650.2 268.2 L650.5 263.9 L650.8 267.1 L651.0 262.2 L651.2 265.8 L651.5 261.2 L651.8 267.9 L652.0 262.1 L652.2 267.2 L652.5 262.6 L652.8 268.1 L653.0 261.0 L653.2 266.7 L653.5 262.0 L653.8 266.7 L654.0 264.3 L654.2 269.7 L654.5 265.0 L654.8 269.7 L655.0 262.6 L655.2 269.1 L655.5 261.2 L655.8 267.7 L656.0 263.1 L656.2 269.5 L656.5 264.7 L656.8 269.3 L657.0 261.3 L657.2 265.2 L657.5 264.2 L657.8 266.8 L658.0 262.4 L658.2 268.9 L658.5 261.7 L658.8 267.3 L659.0 263.3 L659.2 266.8 L659.5 261.8 L659.8 270.7 L660.0 262.2 L660.2 267.8 L660.5 263.3 L660.8 269.3 L661.0 262.8 L661.2 266.8 L661.5 262.0 L661.8 267.4 L662.0 262.0 L662.2 269.2 L662.5 262.7 L662.8 267.3 L663.0 261.5 L663.2 268.1 L663.5 263.8 L663.8 266.7 L664.0 260.9 L664.2 267.9 L664.5 263.4 L664.8 268.3 L665.0 260.8 L665.2 266.8 L665.5 265.2 L665.8 267.6 L666.0 263.0 L666.2 267.1 L666.5 261.1 L666.8 268.6 L667.0 259.9 L667.2 268.2 L667.5 262.2 L667.8 265.7 L668.0 264.2 L668.2 268.5 L668.5 262.6 L668.8 267.3 L669.0 262.9 L669.2 267.9 L669.5 261.6 L669.8 267.9 L670.0 262.5 L670.2 267.9 L670.5 263.4 L670.8 269.0 L671.0 263.3 L671.2 267.5 L671.5 263.1 L671.8 268.5 L672.0 263.2 L672.2 266.7 L672.5 262.6 L672.8 267.4 L673.0 261.4 L673.2 265.3 L673.5 262.2 L673.8 267.9 L674.0 262.9 L674.2 266.5 L674.5 263.3 L674.8 270.7 L675.0 263.6 L675.2 267.9 L675.5 263.0 L675.8 265.4 L676.0 263.5 L676.2 267.0 L676.5 264.7 L676.8 268.2 L677.0 264.2 L677.2 267.9 L677.5 259.8 L677.8 268.1 L678.0 263.7 L678.2 267.3 L678.5 262.0 L678.8 267.5 L679.0 261.8 L679.2 268.5 L679.5 259.6 L679.8 266.7 L680.0 260.2 L680.2 268.1 L680.5 261.5 L680.8 267.5 L681.0 263.3 L681.2 267.8 L681.5 262.2 L681.8 268.5 L682.0 262.1 L682.2 266.2 L682.5 261.1 L682.8 267.4 L683.0 261.5 L683.2 269.4 L683.5 263.0 L683.8 269.6 L684.0 264.0 L684.2 265.9 L684.5 262.2 L684.8 269.3 L685.0 261.6 L685.2 268.7 L685.5 262.3 L685.8 268.8 L686.0 263.1 L686.2 267.5 L686.5 261.9 L686.8 269.3 L687.0 262.9 L687.2 268.8 L687.5 263.0 L687.8 267.4 L688.0 263.9 L688.2 267.5 L688.5 261.1 L688.8 270.4 L689.0 261.1 L689.2 267.5 L689.5 261.4 L689.8 268.3 L690.0 260.7 L690.2 268.7 L690.5 263.4 L690.8 267.6 L691.0 261.3 L691.2 267.5 L691.5 262.3 L691.8 268.9 L692.0 264.2 L692.2 268.5 L692.5 262.9 L692.8 266.9 L693.0 262.4 L693.2 266.6 L693.5 263.7 L693.8 269.9 L694.0 261.1 L694.2 269.5 L694.5 261.5 L694.8 267.2 L695.0 262.4 L695.2 266.5 L695.5 263.5 L695.8 267.3 L696.0 262.9 L696.2 268.1 L696.5 263.0 L696.8 268.6 L697.0 259.9 L697.2 267.8 L697.5 262.9 L697.8 268.9 L698.0 261.6 L698.2 268.1 L698.5 262.5 L698.8 266.3 L699.0 262.5 L699.2 269.1 L699.5 262.4 L699.8 269.3 L700.0 264.4 L700.2 266.9 L700.5 261.8 L700.8 269.0 L701.0 263.4 L701.2 267.3 L701.5 264.0 L701.8 267.3 L702.0 264.1 L702.2 267.8 L702.5 262.7 L702.8 266.7 L703.0 263.8 L703.2 267.8 L703.5 262.5 L703.8 266.9 L704.0 263.4 L704.2 268.8 L704.5 261.0 L704.8 267.5 L705.0 264.0 L705.2 268.8 L705.5 263.4 L705.8 267.3 L706.0 261.6 L706.2 268.5 L706.5 261.8 L706.8 268.5 L707.0 262.4 L707.2 268.0 L707.5 263.1 L707.8 271.9 L708.0 264.4 L708.2 269.2 L708.5 260.1 L708.8 268.6 L709.0 263.4 L709.2 268.0 L709.5 261.1 L709.8 268.8 L710.0 259.8 L710.2 269.9 L710.5 262.7 L710.8 268.2 L711.0 262.4 L711.2 268.3 L711.5 262.9 L711.8 267.7 L712.0 264.7 L712.2 268.9 L712.5 263.9 L712.8 269.1 L713.0 262.1 L713.2 269.2 L713.5 263.4 L713.8 266.6 L714.0 263.6 L714.2 267.4 L714.5 262.5 L714.8 268.5 L715.0 260.9 L715.2 269.5 L715.5 263.9 L715.8 268.4 L716.0 261.2 L716.2 268.9 L716.5 262.6 L716.8 268.6 L717.0 260.0 L717.2 266.3 L717.5 262.6 L717.8 269.2 L718.0 260.5 L718.2 268.2 L718.5 262.8 L718.8 267.3 L719.0 261.6 L719.2 267.1 L719.5 263.7 L719.8 268.2 L720.0 261.4 L720.2 268.8 L720.5 262.7 L720.8 269.0 L721.0 264.7 L721.2 270.9 L721.5 262.9 L721.8 267.0 L722.0 263.9 L722.2 267.5 L722.5 261.3 L722.8 269.1 L723.0 262.6 L723.2 268.4 L723.5 262.8 L723.8 268.2 L724.0 262.0 L724.2 266.5 L724.5 262.2 L724.8 266.9 L725.0 262.5 L725.2 266.7 L725.5 262.1 L725.8 269.6 L726.0 261.8 L726.2 267.3 L726.5 261.0 L726.8 268.9 L727.0 259.9 L727.2 266.3 L727.5 261.8 L727.8 268.1 L728.0 262.9 L728.2 266.8 L728.5 263.7 L728.8 267.3 L729.0 263.1 L729.2 267.6 L729.5 262.9 L729.8 265.8 L730.0 263.2 L730.2 269.5 L730.5 262.3 L730.8 267.8 L731.0 262.7 L731.2 267.1 L731.5 260.1 L731.8 267.7 L732.0 263.5 L732.2 267.0 L732.5 263.4 L732.8 268.9 L733.0 262.1 L733.2 269.7 L733.5 261.9 L733.8 264.9 L734.0 263.4 L734.2 268.6 L734.5 262.5 L734.8 266.8 L735.0 264.1 L735.2 269.9 L735.5 262.8 L735.8 269.4 L736.0 263.3 L736.2 266.8 L736.5 260.9 L736.8 269.8 L737.0 261.9 L737.2 265.9 L737.5 264.3 L737.8 268.5 L738.0 262.4 L738.2 267.5 L738.5 263.3 L738.8 269.9 L739.0 262.2 L739.2 266.3 L739.5 261.4 L739.8 266.9 L740.0 262.3 L740.2 267.6 L740.5 261.7 L740.8 266.7 L741.0 263.1 L741.2 268.1" stroke="#f5ee00" stroke-width="1" fill="none" stroke-linejoin="round"/>
<path d="M571.5 157 V300" stroke="#d9cf00" stroke-width="1.1" fill="none"/>
<path d="M188.6 272.2 l4.4 10.3 l4.4 -10.3 M257.6 274.2 l4.4 10.3 l4.4 -10.3 M308.1 271.7 l4.4 10.3 l4.4 -10.3 M377.6 274.2 l4.4 10.3 l4.4 -10.3 M385.1 273.7 l4.4 10.3 l4.4 -10.3 M386.6 273.7 l4.4 10.3 l4.4 -10.3 M403.1 274.2 l4.4 10.3 l4.4 -10.3 M433.6 274.7 l4.4 10.3 l4.4 -10.3 M451.1 274.7 l4.4 10.3 l4.4 -10.3 M465.1 270.7 l4.4 10.3 l4.4 -10.3 M489.6 274.7 l4.4 10.3 l4.4 -10.3 M499.1 274.7 l4.4 10.3 l4.4 -10.3 M508.6 274.7 l4.4 10.3 l4.4 -10.3 M515.6 274.7 l4.4 10.3 l4.4 -10.3 M519.6 274.7 l4.4 10.3 l4.4 -10.3 M521.6 274.7 l4.4 10.3 l4.4 -10.3 M526.1 274.7 l4.4 10.3 l4.4 -10.3 M530.6 274.7 l4.4 10.3 l4.4 -10.3 M548.6 274.7 l4.4 10.3 l4.4 -10.3 M560.1 274.7 l4.4 10.3 l4.4 -10.3 M567.1 145.2 l4.4 10.3 l4.4 -10.3" stroke="#f4f4f4" stroke-width="1.4" fill="none"/>
<path d="M56.5 353.6 L61 348 L65.5 353.6 Z" fill="#f0d800"/>
</svg>
<div class="t r" style="right:1223px;top:104.9px;font-size:12.4px;-webkit-text-stroke:0.4px #e4e4e4;color:#e4e4e4">Log</div>
<div class="t r" style="right:1223px;top:123.9px;font-size:12.4px;-webkit-text-stroke:0.4px #e4e4e4;color:#e4e4e4">97</div>
<div class="t r" style="right:1223px;top:148px;font-size:12.4px;-webkit-text-stroke:0.4px #e4e4e4;color:#e4e4e4">87</div>
<div class="t r" style="right:1223px;top:172.1px;font-size:12.4px;-webkit-text-stroke:0.4px #e4e4e4;color:#e4e4e4">77</div>
<div class="t r" style="right:1223px;top:196.2px;font-size:12.4px;-webkit-text-stroke:0.4px #e4e4e4;color:#e4e4e4">67</div>
<div class="t r" style="right:1223px;top:220.3px;font-size:12.4px;-webkit-text-stroke:0.4px #e4e4e4;color:#e4e4e4">57</div>
<div class="t r" style="right:1223px;top:244.4px;font-size:12.4px;-webkit-text-stroke:0.4px #e4e4e4;color:#e4e4e4">47</div>
<div class="t r" style="right:1223px;top:268.5px;font-size:12.4px;-webkit-text-stroke:0.4px #e4e4e4;color:#e4e4e4">37</div>
<div class="t r" style="right:1223px;top:292.6px;font-size:12.4px;-webkit-text-stroke:0.4px #e4e4e4;color:#e4e4e4">27</div>
<div class="t r" style="right:1223px;top:316.7px;font-size:12.4px;-webkit-text-stroke:0.4px #e4e4e4;color:#e4e4e4">17</div>
<div class="t r" style="right:1223px;top:335.4px;font-size:12.4px;-webkit-text-stroke:0.4px #e4e4e4;color:#e4e4e4">7</div>
<div class="t" style="left:61px;top:359px;font-size:14.2px;color:#e4e4e4">Start Freq : 30.000000 MHz</div>
<div class="t r" style="right:537px;top:359px;font-size:14.2px;color:#e4e4e4">Stop Freq : 3.200000000 GHz</div>
<svg class="abs" style="left:724px;top:80px" width="13" height="13"><path d="M1.5 1.5 L11.5 11.5 M11.5 1.5 L1.5 11.5" stroke="#fff" stroke-width="2.2" fill="none"/></svg>
<div class="panel" style="left:753px;top:70px;width:247.5px;height:324px;border:2.2px solid #0db487;border-radius:6px"></div>
<div class="dd" style="left:756.5px;top:72px;width:71px;height:29.5px"><span style="left:3px">Meters</span><i style="left:56px;top:12px"></i></div>
<svg class="abs" style="left:753px;top:70px" width="248" height="324" viewBox="753 70 248 324">
<rect x="758.2" y="106.2" width="236.8" height="237.3" fill="none" stroke="#626262" stroke-width="1.4"/>
<rect x="793" y="285" width="25" height="58.5" fill="#ffff00"/>
<path d="M793 106.5 V343.5 M817.6 106.5 V343.5" stroke="#a8a8a8" stroke-width="1.3" fill="none"/>
<path d="M793.6 275 H817" stroke="#a09a00" stroke-width="1.3" fill="none"/>
<g stroke="#1e8ee6" stroke-width="1.2" fill="none"><path d="M990.5 352.5 C986 349.5 977 350.3 974.3 353.2 C972.6 355.2 973.4 357 976 358.2"/><path d="M975.6 357.6 C980 360.6 989.3 359.8 991.9 356.8 C993.4 354.8 992.6 353 990 351.8"/></g>
<path d="M986.6 349.6 L991.8 353.6 L986.2 354.6 Z M979.6 355.6 L974.2 356.6 L979.2 360.6 Z" fill="#1e8ee6"/>
</svg>
<div class="t" style="left:776px;top:277px;width:16px;height:16px;font-size:14px;color:#f2ea00;transform:rotate(90deg);transform-origin:8px 8px;-webkit-text-stroke:0.3px #f2ea00"><span style="position:absolute;left:-9px;top:1px">Peak</span></div>
<div class="t" style="left:785.5px;top:348.5px;font-family:'DejaVu Sans Mono','Liberation Mono',monospace;font-size:14px;color:#f0e800;-webkit-text-stroke:0.55px #f0e800">31.83</div>
<div class="t" style="left:783px;top:374.5px;font-family:'DejaVu Sans Mono','Liberation Mono',monospace;font-size:14px;color:#f0e800;-webkit-text-stroke:0.55px #f0e800">M:35.84</div>
<svg class="abs" style="left:976px;top:80px" width="13" height="13"><path d="M1.5 1.5 L11.5 11.5 M11.5 1.5 L1.5 11.5" stroke="#fff" stroke-width="2.2" fill="none"/></svg>
<div class="panel" style="left:1005.5px;top:70px;width:268.5px;height:653.5px"></div>
<div class="abs" style="left:1010px;top:74px;width:259.5px;height:41px;background:#4a5d62;border-radius:4px 4px 0 0"></div>
<div class="t" style="left:1090px;top:85px;width:100px;text-align:center;font-size:17.5px;color:#eee">Frequency</div>
<div class="abs" style="left:1230px;top:88px;width:0;height:0;border-left:7px solid transparent;border-right:7px solid transparent;border-top:11px solid #f0f0f0"></div>
<div class="abs" style="left:1010.5px;top:121px;width:176.5px;height:597px;border:3.7px solid #4a5d62;border-radius:4px 0 0 3px;background:#000"></div>
<div class="abs" style="left:1186px;top:121px;width:83px;height:50.5px;background:#4a5d62;border-radius:0 5px 5px 0"></div>
<div class="t" style="left:1187px;top:137.5px;width:82px;text-align:center;font-size:14.5px;font-weight:bold;color:#f0f0f0">Setting</div>
<div class="abs" style="left:1016px;top:126.4px;width:165.6px;height:69px;border:2px solid #5b97e0;border-radius:6px;background:#22343c"></div>
<div class="item" style="top:128.5px;height:63.8px;background:none">
<b style="top:8px">Freq(Meter)</b>
<em style="top:37.1px">515.000000 MHz</em><u style="top:55.6px"></u>
</div>
<div class="item" style="top:198.2px;height:63.8px">
<b style="top:8px">Midspan Freq</b>
<em style="top:37.1px">1.615000 GHz</em><u style="top:55.6px"></u>
</div>
<div class="item" style="top:267.7px;height:63.4px">
<b style="top:8px">Span</b>
<em style="top:37.1px">3.170000 GHz</em><u style="top:55.6px"></u>
</div>
<div class="item" style="top:337px;height:63.7px">
<b style="top:8px">Start Freq</b>
<em style="top:37.1px">30.000000 MHz</em><u style="top:55.6px"></u>
</div>
<div class="item" style="top:406px;height:73px">
<b style="top:8px">Start Freq Mode</b>
<div class="tog" style="top:33.5px">
<s style="left:55px"></s>
<span style="left:0;color:#444">Manual</span><span style="left:55px;color:#0a5a3a">Auto</span>
</div>
</div>
<div class="item" style="top:484.2px;height:63px">
<b style="top:8px">Stop Freq</b>
<em style="top:37.1px">3.200000 GHz</em><u style="top:55.6px"></u>
</div>
<div class="item" style="top:553.4px;height:71.3px">
<b style="top:8px">Stop Freq Mode</b>
<div class="tog" style="top:33.5px">
<s style="left:55px"></s>
<span style="left:0;color:#444">Manual</span><span style="left:55px;color:#0a5a3a">Auto</span>
</div>
</div>
<div class="item" style="top:631.2px;height:72px">
<b style="top:8px">X Scale Type</b>
<div class="tog" style="top:33.5px">
<s style="left:0px"></s>
<span style="left:0;color:#0a5a3a">Log</span><span style="left:55px;color:#444">Lin</span>
</div>
</div>
<div class="abs" style="left:1243.5px;top:691px;width:27.5px;height:27.5px;background:#22343c;border-radius:1px"></div>
<svg class="abs" style="left:1243.5px;top:691px" width="28" height="28"><path d="M5 7.5 L12 13.8 L5 20" stroke="#fff" stroke-width="2" fill="none"/><path d="M11.5 7.6 H25 M14.5 13.8 H25 M11.5 20 H25" stroke="#fff" stroke-width="2.2" fill="none"/></svg>
<div class="panel" style="left:8px;top:399.5px;width:991.5px;height:323.5px"></div>
<div class="dd" style="left:10px;top:402px;width:95px;height:29.5px"><span style="left:3px">Signal List</span><i style="left:81px;top:12px"></i></div>
<div class="abs" style="left:10.4px;top:434.6px;width:984.1px;height:282.9px;overflow:hidden;border:1px solid #5a5a5a;background:#000">
<div class="abs" style="left:0;top:0;width:976.6px;height:32px;background:#495256"></div>
<div class="abs" style="left:0;top:32px;width:976.6px;height:45px;background:#333;border-top:2px solid #0a9e78;border-bottom:2px solid #0a9e78"></div>
<div class="abs" style="left:0;top:32px;width:2px;height:45px;background:#0a9e78"></div>
<div class="abs" style="left:0;top:120.1px;width:976.6px;height:1.2px;background:#5e5e5e"></div>
<div class="abs" style="left:0;top:164.45px;width:976.6px;height:1.2px;background:#5e5e5e"></div>
<div class="abs" style="left:0;top:208.8px;width:976.6px;height:1.2px;background:#5e5e5e"></div>
<div class="abs" style="left:0;top:253.15px;width:976.6px;height:1.2px;background:#5e5e5e"></div>
<div class="abs" style="left:0;top:297.5px;width:976.6px;height:1.2px;background:#5e5e5e"></div>
<div class="abs" style="left:49px;top:0;width:1.2px;height:300px;background:#5e5e5e"></div>
<div class="abs" style="left:100.6px;top:0;width:1.2px;height:300px;background:#5e5e5e"></div>
<div class="abs" style="left:152px;top:0;width:1.2px;height:300px;background:#5e5e5e"></div>
<div class="abs" style="left:311px;top:0;width:1.2px;height:300px;background:#5e5e5e"></div>
<div class="abs" style="left:414px;top:0;width:1.2px;height:300px;background:#5e5e5e"></div>
<div class="abs" style="left:516.5px;top:0;width:1.2px;height:300px;background:#5e5e5e"></div>
<div class="abs" style="left:619.2px;top:0;width:1.2px;height:300px;background:#5e5e5e"></div>
<div class="abs" style="left:746.8px;top:0;width:1.2px;height:300px;background:#5e5e5e"></div>
<div class="abs" style="left:875.3px;top:0;width:1.2px;height:300px;background:#5e5e5e"></div>
<div class="t" style="left:-45.4px;top:8.7px;width:140px;text-align:center;font-size:14.2px;color:#eee">NO.</div>
<div class="t" style="left:56.9px;top:8.7px;width:140px;text-align:center;font-size:14.2px;color:#eee">Trace</div>
<div class="t" style="left:162.1px;top:8.7px;width:140px;text-align:center;font-size:14.2px;color:#eee">Freq</div>
<div class="t" style="left:293.1px;top:8.7px;width:140px;text-align:center;font-size:14.2px;color:#eee">Peak Ampt</div>
<div class="t" style="left:395.85px;top:8.7px;width:140px;text-align:center;font-size:14.2px;color:#eee">QPeak Ampt</div>
<div class="t" style="left:498.45px;top:8.7px;width:140px;text-align:center;font-size:14.2px;color:#eee">EAvg Ampt</div>
<div class="t" style="left:613.6px;top:8.7px;width:140px;text-align:center;font-size:14.2px;color:#eee">Peak Lim1Δ</div>
<div class="t" style="left:741.65px;top:8.7px;width:140px;text-align:center;font-size:14.2px;color:#eee">QPeak Lim1Δ</div>
<div class="t" style="left:870.25px;top:8.7px;width:140px;text-align:center;font-size:14.2px;color:#eee">EAvg Lim1Δ</div>
<div class="t" style="left:-45.4px;top:47.1px;width:140px;text-align:center;font-size:14.2px;color:#eee">1</div>
<div class="abs" style="left:65.9px;top:44.6px;width:19.5px;height:19.5px;border:2px solid #d0d0d0;border-radius:4px"></div>
<div class="t" style="left:56.9px;top:47.1px;width:140px;text-align:center;font-size:14.2px;color:#eee">1</div>
<div class="t" style="left:162.1px;top:47.1px;width:140px;text-align:center;font-size:14.2px;color:#eee">709.090909 MHz</div>
<div class="t" style="left:293.1px;top:47.1px;width:140px;text-align:center;font-size:14.2px;color:#eee">32.23 dBµV</div>
<div class="t" style="left:395.85px;top:47.1px;width:140px;text-align:center;font-size:14.2px;color:#eee">--</div>
<div class="t" style="left:498.45px;top:47.1px;width:140px;text-align:center;font-size:14.2px;color:#eee">--</div>
<div class="t" style="left:613.6px;top:47.1px;width:140px;text-align:center;font-size:14.2px;color:#eee">--</div>
<div class="t" style="left:741.65px;top:47.1px;width:140px;text-align:center;font-size:14.2px;color:#eee">--</div>
<div class="t" style="left:870.25px;top:47.1px;width:140px;text-align:center;font-size:14.2px;color:#eee">--</div>
<div class="t" style="left:-45.4px;top:91.45px;width:140px;text-align:center;font-size:14.2px;color:#eee">2</div>
<div class="abs" style="left:65.9px;top:88.95px;width:19.5px;height:19.5px;border:2px solid #d0d0d0;border-radius:4px"></div>
<div class="t" style="left:56.9px;top:91.45px;width:140px;text-align:center;font-size:14.2px;color:#eee">1</div>
<div class="t" style="left:162.1px;top:91.45px;width:140px;text-align:center;font-size:14.2px;color:#eee">674.827483 MHz</div>
<div class="t" style="left:293.1px;top:91.45px;width:140px;text-align:center;font-size:14.2px;color:#eee">32.56 dBµV</div>
<div class="t" style="left:395.85px;top:91.45px;width:140px;text-align:center;font-size:14.2px;color:#eee">--</div>
<div class="t" style="left:498.45px;top:91.45px;width:140px;text-align:center;font-size:14.2px;color:#eee">--</div>
<div class="t" style="left:613.6px;top:91.45px;width:140px;text-align:center;font-size:14.2px;color:#eee">--</div>
<div class="t" style="left:741.65px;top:91.45px;width:140px;text-align:center;font-size:14.2px;color:#eee">--</div>
<div class="t" style="left:870.25px;top:91.45px;width:140px;text-align:center;font-size:14.2px;color:#eee">--</div>
<div class="t" style="left:-45.4px;top:135.8px;width:140px;text-align:center;font-size:14.2px;color:#eee">3</div>
<div class="abs" style="left:65.9px;top:133.3px;width:19.5px;height:19.5px;border:2px solid #d0d0d0;border-radius:4px"></div>
<div class="t" style="left:56.9px;top:135.8px;width:140px;text-align:center;font-size:14.2px;color:#eee">1</div>
<div class="t" style="left:162.1px;top:135.8px;width:140px;text-align:center;font-size:14.2px;color:#eee">708.850885 MHz</div>
<div class="t" style="left:293.1px;top:135.8px;width:140px;text-align:center;font-size:14.2px;color:#eee">32.72 dBµV</div>
<div class="t" style="left:395.85px;top:135.8px;width:140px;text-align:center;font-size:14.2px;color:#eee">--</div>
<div class="t" style="left:498.45px;top:135.8px;width:140px;text-align:center;font-size:14.2px;color:#eee">--</div>
<div class="t" style="left:613.6px;top:135.8px;width:140px;text-align:center;font-size:14.2px;color:#eee">--</div>
<div class="t" style="left:741.65px;top:135.8px;width:140px;text-align:center;font-size:14.2px;color:#eee">--</div>
<div class="t" style="left:870.25px;top:135.8px;width:140px;text-align:center;font-size:14.2px;color:#eee">--</div>
<div class="t" style="left:-45.4px;top:180.15px;width:140px;text-align:center;font-size:14.2px;color:#eee">4</div>
<div class="abs" style="left:65.9px;top:177.65px;width:19.5px;height:19.5px;border:2px solid #d0d0d0;border-radius:4px"></div>
<div class="t" style="left:56.9px;top:180.15px;width:140px;text-align:center;font-size:14.2px;color:#eee">1</div>
<div class="t" style="left:162.1px;top:180.15px;width:140px;text-align:center;font-size:14.2px;color:#eee">494.378876 MHz</div>
<div class="t" style="left:293.1px;top:180.15px;width:140px;text-align:center;font-size:14.2px;color:#eee">32.84 dBµV</div>
<div class="t" style="left:395.85px;top:180.15px;width:140px;text-align:center;font-size:14.2px;color:#eee">--</div>
<div class="t" style="left:498.45px;top:180.15px;width:140px;text-align:center;font-size:14.2px;color:#eee">--</div>
<div class="t" style="left:613.6px;top:180.15px;width:140px;text-align:center;font-size:14.2px;color:#eee">--</div>
<div class="t" style="left:741.65px;top:180.15px;width:140px;text-align:center;font-size:14.2px;color:#eee">--</div>
<div class="t" style="left:870.25px;top:180.15px;width:140px;text-align:center;font-size:14.2px;color:#eee">--</div>
<div class="t" style="left:-45.4px;top:224.5px;width:140px;text-align:center;font-size:14.2px;color:#eee">5</div>
<div class="abs" style="left:65.9px;top:222px;width:19.5px;height:19.5px;border:2px solid #d0d0d0;border-radius:4px"></div>
<div class="t" style="left:56.9px;top:224.5px;width:140px;text-align:center;font-size:14.2px;color:#eee">1</div>
<div class="t" style="left:162.1px;top:224.5px;width:140px;text-align:center;font-size:14.2px;color:#eee">400.460092 MHz</div>
<div class="t" style="left:293.1px;top:224.5px;width:140px;text-align:center;font-size:14.2px;color:#eee">32.87 dBµV</div>
<div class="t" style="left:395.85px;top:224.5px;width:140px;text-align:center;font-size:14.2px;color:#eee">--</div>
<div class="t" style="left:498.45px;top:224.5px;width:140px;text-align:center;font-size:14.2px;color:#eee">--</div>
<div class="t" style="left:613.6px;top:224.5px;width:140px;text-align:center;font-size:14.2px;color:#eee">--</div>
<div class="t" style="left:741.65px;top:224.5px;width:140px;text-align:center;font-size:14.2px;color:#eee">--</div>
<div class="t" style="left:870.25px;top:224.5px;width:140px;text-align:center;font-size:14.2px;color:#eee">--</div>
<div class="t" style="left:-45.4px;top:268.85px;width:140px;text-align:center;font-size:14.2px;color:#eee">6</div>
<div class="abs" style="left:65.9px;top:266.35px;width:19.5px;height:19.5px;border:2px solid #d0d0d0;border-radius:4px"></div>
<div class="t" style="left:56.9px;top:268.85px;width:140px;text-align:center;font-size:14.2px;color:#eee">1</div>
<div class="t" style="left:162.1px;top:268.85px;width:140px;text-align:center;font-size:14.2px;color:#eee">786.618662 MHz</div>
<div class="t" style="left:293.1px;top:268.85px;width:140px;text-align:center;font-size:14.2px;color:#eee">32.90 dBµV</div>
<div class="t" style="left:395.85px;top:268.85px;width:140px;text-align:center;font-size:14.2px;color:#eee">--</div>
<div class="t" style="left:498.45px;top:268.85px;width:140px;text-align:center;font-size:14.2px;color:#eee">--</div>
<div class="t" style="left:613.6px;top:268.85px;width:140px;text-align:center;font-size:14.2px;color:#eee">--</div>
<div class="t" style="left:741.65px;top:268.85px;width:140px;text-align:center;font-size:14.2px;color:#eee">--</div>
<div class="t" style="left:870.25px;top:268.85px;width:140px;text-align:center;font-size:14.2px;color:#eee">--</div>
<div class="abs" style="left:976.6px;top:0;width:7px;height:300px;background:#000"></div>
<div class="abs" style="left:976.9px;top:5.9px;width:6px;height:62px;background:#8a8a8a;border-radius:3px"></div>
<div class="abs" style="left:0;top:274.4px;width:976.6px;height:8px;background:#000"></div>
<div class="abs" style="left:4.6px;top:275.4px;width:670px;height:6.3px;background:#8a8a8a;border-radius:3px"></div>
</div>
<svg class="abs" style="left:976px;top:410px" width="13" height="13"><path d="M1.5 1.5 L11.5 11.5 M11.5 1.5 L1.5 11.5" stroke="#fff" stroke-width="2.2" fill="none"/></svg>
<div class="panel" style="left:8px;top:729.6px;width:76.4px;height:66.4px"></div>
<div class="panel" style="left:90.2px;top:729.6px;width:909.3px;height:66.4px"></div>
<div class="panel" style="left:1005.5px;top:729.6px;width:268.5px;height:66.4px"></div>
<svg class="abs" style="left:8px;top:730px" width="77" height="66" viewBox="8 730 77 66">
<defs><linearGradient id="gs" x1="0" y1="0" x2="1" y2="1"><stop offset="0" stop-color="#f4f4f4"/><stop offset="0.45" stop-color="#9a9a9a"/><stop offset="0.75" stop-color="#dcdcdc"/><stop offset="1" stop-color="#8a8a8a"/></linearGradient><radialGradient id="gd" cx="0.5" cy="0.5" r="0.6"><stop offset="0" stop-color="#4a403c"/><stop offset="1" stop-color="#262020"/></radialGradient><linearGradient id="gr" x1="0" y1="0" x2="1" y2="1"><stop offset="0" stop-color="#ffffff"/><stop offset="0.5" stop-color="#8c8c8c"/><stop offset="1" stop-color="#e0e0e0"/></linearGradient></defs>
<path d="M53.96 731.70 A9.00 9.00 0 0 1 38.04 731.70 A32.30 32.30 0 0 0 22.87 740.45 A9.00 9.00 0 0 1 14.91 754.24 A32.30 32.30 0 0 0 14.91 771.76 A9.00 9.00 0 0 1 22.87 785.55 A32.30 32.30 0 0 0 38.04 794.30 A9.00 9.00 0 0 1 53.96 794.30 A32.30 32.30 0 0 0 69.13 785.55 A9.00 9.00 0 0 1 77.09 771.76 A32.30 32.30 0 0 0 77.09 754.24 A9.00 9.00 0 0 1 69.13 740.45 A32.30 32.30 0 0 0 53.96 731.70 Z" fill="url(#gs)"/>
<path d="M53.08 738.40 A8.50 8.50 0 0 1 38.92 738.40 A25.60 25.60 0 0 0 28.24 744.57 A8.50 8.50 0 0 1 21.15 756.83 A25.60 25.60 0 0 0 21.15 769.17 A8.50 8.50 0 0 1 28.24 781.43 A25.60 25.60 0 0 0 38.92 787.60 A8.50 8.50 0 0 1 53.08 787.60 A25.60 25.60 0 0 0 63.76 781.43 A8.50 8.50 0 0 1 70.85 769.17 A25.60 25.60 0 0 0 70.85 756.83 A8.50 8.50 0 0 1 63.76 744.57 A25.60 25.60 0 0 0 53.08 738.40 Z" fill="url(#gd)"/>
<text x="33.4" y="776.2" font-family="Liberation Sans, sans-serif" font-weight="bold" font-size="36" fill="url(#gr)" stroke="#4a4a4a" stroke-width="0.7" textLength="28" lengthAdjust="spacingAndGlyphs">R</text>
</svg>
<div class="abs" style="left:95.4px;top:745px;width:117px;height:45.5px;border-radius:0 5px 5px 5px;background:#0cc383"></div>
<div class="abs" style="left:95.4px;top:735px;width:64.6px;height:22px;border-radius:5px 5px 0 0;background:#0cc383"></div>
<div class="abs" style="left:97.4px;top:737px;width:60.6px;height:19px;background:#000;border-radius:3px 3px 0 0"></div>
<div class="abs" style="left:97.4px;top:755.6px;width:113px;height:32.9px;background:#4a5d62;border-radius:0 0 3px 3px"></div>
<div class="t" style="left:107.2px;top:738.5px;font-size:14.6px;color:#f4f4f4">EMI</div>
<div class="t" style="left:106.4px;top:762.2px;font-size:17px;color:#f4f4f4">Freq Scan 1</div>
<div class="btn" style="left:940px;top:737.3px;width:51px;height:51px;border-color:#6a7276;border-radius:4px"></div>
<svg class="abs" style="left:940px;top:737px" width="51" height="51"><path d="M16 26 H36 M26 16 V36" stroke="#d6d6d6" stroke-width="2.8" fill="none"/></svg>
<div class="t" style="left:1098px;top:742px;font-size:15px;color:#e8e8e8;transform:scaleX(0.72);transform-origin:0 0">Rmt</div>
<div class="t" style="left:1124.5px;top:741.5px;font-size:16.5px;font-weight:bold;font-style:italic;color:#fff;letter-spacing:-1.2px">LXI</div>
<svg class="abs" style="left:1156px;top:740px" width="24" height="20"><path d="M2 7.6 H5.2 L10 3.2 V17 L5.2 12.6 H2 Z" fill="none" stroke="#e8e8e8" stroke-width="1.2" stroke-linejoin="round"/><path d="M7.6 6 V14.4" stroke="#e8e8e8" stroke-width="1" fill="none"/><path d="M14 7 L20.6 13.6 M20.6 7 L14 13.6" stroke="#e8e8e8" stroke-width="1.2" fill="none"/></svg>
<div class="t" style="left:1040px;top:767.5px;width:200px;text-align:center;font-size:16px;color:#f0f0f0">2025-10-11 07:42:52</div>
</div></body></html>
